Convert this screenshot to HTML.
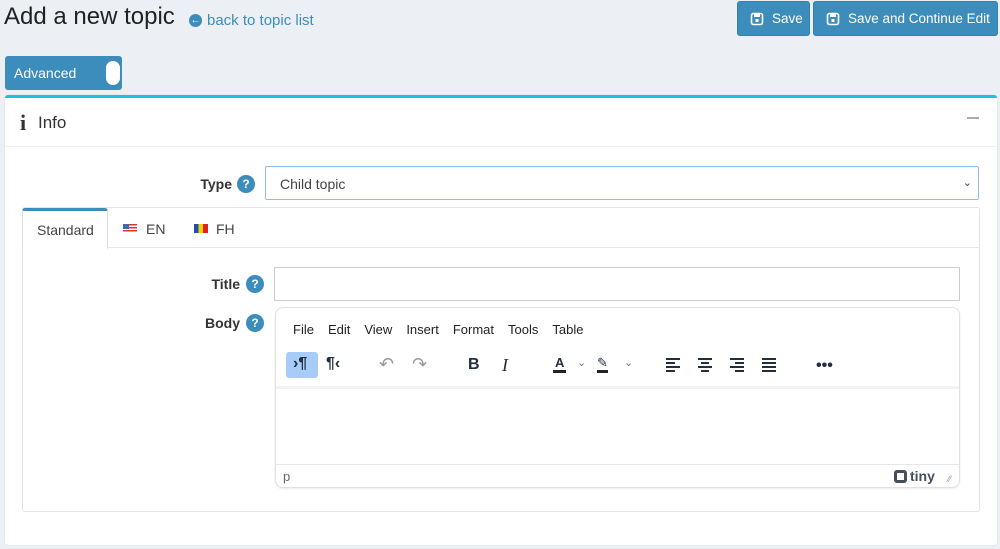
<!DOCTYPE html>
<html><head><meta charset="utf-8"><style>
*{box-sizing:border-box;margin:0;padding:0}
body{width:1000px;height:549px;background:#ecf0f4;font-family:"Liberation Sans",sans-serif;position:relative;overflow:hidden;color:#212529}
.a{position:absolute}
.btn{position:absolute;background:#3c8dbc;color:#fff;border:1px solid #367fa9;border-radius:3px;font-size:13.5px;display:flex;align-items:center;gap:8px;padding-left:12px}
.q{display:inline-block;width:18px;height:18px;border-radius:50%;background:#3c8dbc;color:#fff;font-size:12px;font-weight:bold;text-align:center;line-height:18px;vertical-align:middle}
.lbl{position:absolute;font-size:14px;font-weight:bold;color:#333;text-align:right}
.menu span{margin-right:14px}
.ic{position:absolute;top:0}
</style></head><body>
<div class="a" style="left:4px;top:3px;font-size:24px;color:#222">Add a new topic</div>
<div class="a" style="left:189px;top:12px;font-size:15px;color:#3c8dbc;display:flex;align-items:center;gap:5px"><span style="display:inline-block;width:13px;height:13px;border-radius:50%;background:#3c8dbc;color:#fff;font-size:10px;line-height:13px;text-align:center;font-weight:bold">←</span>back to topic list</div>
<div class="btn" style="left:737px;top:1px;width:73px;height:35px"><svg width="14" height="14" viewBox="0 0 14 14"><rect x="1.5" y="1.5" width="11" height="11" rx="2" fill="none" stroke="#fff" stroke-width="1.6"/><rect x="4" y="2" width="6" height="3" fill="#fff"/><rect x="5.5" y="7" width="3" height="3" fill="#fff"/></svg>Save</div>
<div class="btn" style="left:813px;top:1px;width:185px;height:35px"><svg width="14" height="14" viewBox="0 0 14 14"><rect x="1.5" y="1.5" width="11" height="11" rx="2" fill="none" stroke="#fff" stroke-width="1.6"/><rect x="4" y="2" width="6" height="3" fill="#fff"/><rect x="5.5" y="7" width="3" height="3" fill="#fff"/></svg>Save and Continue Edit</div>
<div class="a" style="left:5px;top:56px;width:117px;height:34px;background:#3c8dbc;border-radius:3px;color:#fff;font-size:14px;padding:9px 0 0 9px">Advanced<div class="a" style="left:101px;top:5px;width:14px;height:24px;background:#fff;border-radius:7px"></div></div>
<div class="a" style="left:5px;top:95px;width:992px;height:450px;background:#fff;border-top:3px solid #17c1e8;border-radius:3px;box-shadow:0 0 1px rgba(0,0,0,.2)"></div>
<div class="a" style="left:5px;top:146px;width:992px;height:1px;background:#f2f2f2"></div>
<div class="a" style="left:20px;top:110px;font-size:22px;font-family:'Liberation Serif',serif;font-weight:bold;color:#333">i</div>
<div class="a" style="left:38px;top:113px;font-size:17px;color:#333">Info</div>
<div class="a" style="left:967px;top:117px;width:12px;height:2px;background:#aaa"></div>
<div class="lbl" style="left:150px;top:176px;width:82px">Type</div>
<span class="q a" style="left:237px;top:175px">?</span>
<div class="a" style="left:265px;top:166px;width:714px;height:34px;border:1px solid #8fbfe8;border-radius:2px;font-size:14px;color:#444;padding:9px 0 0 14px">Child topic<span class="a" style="right:6px;top:9px;font-size:11px">⌄</span></div>
<div class="a" style="left:22px;top:207px;width:958px;height:305px;border:1px solid #e3e3e3;border-radius:3px"></div>
<div class="a" style="left:22px;top:247px;width:958px;height:1px;background:#e6e6e6"></div>
<div class="a" style="left:22px;top:208px;width:86px;height:41px;background:#fff;border:1px solid #ddd;border-bottom:none;border-top:3px solid #3c8dbc;border-radius:3px 3px 0 0;font-size:14px;color:#444;padding:11px 0 0 14px">Standard</div>
<div class="a" style="left:123px;top:224px;width:14px;height:9px;background:repeating-linear-gradient(#d33 0 1.5px,#fff 1.5px 3px)"><div style="width:6px;height:5px;background:#4466aa"></div></div>
<div class="a" style="left:146px;top:221px;font-size:14px;color:#444">EN</div>
<div class="a" style="left:194px;top:224px;width:14px;height:9px;background:linear-gradient(90deg,#1a4fb0 33%,#f5d000 33% 66%,#d22 66%)"></div>
<div class="a" style="left:216px;top:221px;font-size:14px;color:#444">FH</div>
<div class="lbl" style="left:180px;top:276px;width:60px">Title</div>
<span class="q a" style="left:246px;top:275px">?</span>
<div class="a" style="left:274px;top:267px;width:686px;height:34px;border:1px solid #ccc"></div>
<div class="lbl" style="left:180px;top:315px;width:60px">Body</div>
<span class="q a" style="left:246px;top:314px">?</span>
<div class="a" style="left:275px;top:307px;width:685px;height:181px;border:1px solid #e0e0e0;border-radius:8px;box-shadow:0 1px 2px rgba(0,0,0,.08)"></div>
<div class="a menu" style="left:293px;top:322px;font-size:13px;color:#222"><span>File</span><span>Edit</span><span>View</span><span>Insert</span><span>Format</span><span>Tools</span><span>Table</span></div>
<div class="a" style="left:276px;top:386px;width:683px;height:3px;background:#f2f2f2"></div>
<div class="a" style="left:286px;top:352px;width:32px;height:26px;background:#a6ccf7;border-radius:3px"></div>
<div class="a" style="left:286px;top:352px;height:26px;width:680px;font-size:16px;color:#222f3e">
<span class="ic" style="left:7px;top:3px;font-weight:bold">›¶</span>
<span class="ic" style="left:40px;top:3px;font-weight:bold">¶‹</span>
<span class="ic" style="left:93px;top:2px;color:#999;font-size:18px">↶</span>
<span class="ic" style="left:126px;top:2px;color:#999;font-size:18px">↷</span>
<span class="ic" style="left:182px;top:4px;font-weight:bold">B</span>
<span class="ic" style="left:216px;top:3px;font-style:italic;font-family:'Liberation Serif',serif;font-size:18px">I</span>
<span class="ic" style="left:267px;top:3px;font-size:13px;font-weight:bold;border-bottom:3px solid #222;line-height:15px;padding:0 2px">A</span>
<span class="ic" style="left:291px;top:4px;font-size:11px;color:#777">⌄</span>
<span class="ic" style="left:311px;top:3px;font-size:13px;border-bottom:3px solid #222;line-height:15px">✎</span>
<span class="ic" style="left:338px;top:4px;font-size:11px;color:#777">⌄</span>
<svg class="ic" style="left:380px;top:6px" width="110" height="14"><g fill="#222f3e"><rect x="0" y="0" width="14" height="2"/><rect x="0" y="4" width="9" height="2"/><rect x="0" y="8" width="14" height="2"/><rect x="0" y="12" width="9" height="2"/><rect x="32" y="0" width="14" height="2"/><rect x="35" y="4" width="8" height="2"/><rect x="32" y="8" width="14" height="2"/><rect x="35" y="12" width="8" height="2"/><rect x="64" y="0" width="14" height="2"/><rect x="69" y="4" width="9" height="2"/><rect x="64" y="8" width="14" height="2"/><rect x="69" y="12" width="9" height="2"/><rect x="96" y="0" width="14" height="2"/><rect x="96" y="4" width="14" height="2"/><rect x="96" y="8" width="14" height="2"/><rect x="96" y="12" width="14" height="2"/></g></svg>
<span class="ic" style="left:530px;top:5px;font-weight:bold">•••</span>
</div>
<div class="a" style="left:276px;top:464px;width:683px;height:1px;background:#e6e6e6"></div>
<div class="a" style="left:283px;top:469px;font-size:13px;color:#666">p</div>
<div class="a" style="left:894px;top:468px;font-size:14px;font-weight:bold;color:#454f5b;display:flex;align-items:center;gap:3px"><span style="display:inline-block;width:13px;height:13px;border:3px solid #454f5b;border-radius:3px"></span>tiny</div>
<div class="a" style="left:948px;top:474px;font-size:9px;color:#999">⁄⁄</div>
</body></html>
